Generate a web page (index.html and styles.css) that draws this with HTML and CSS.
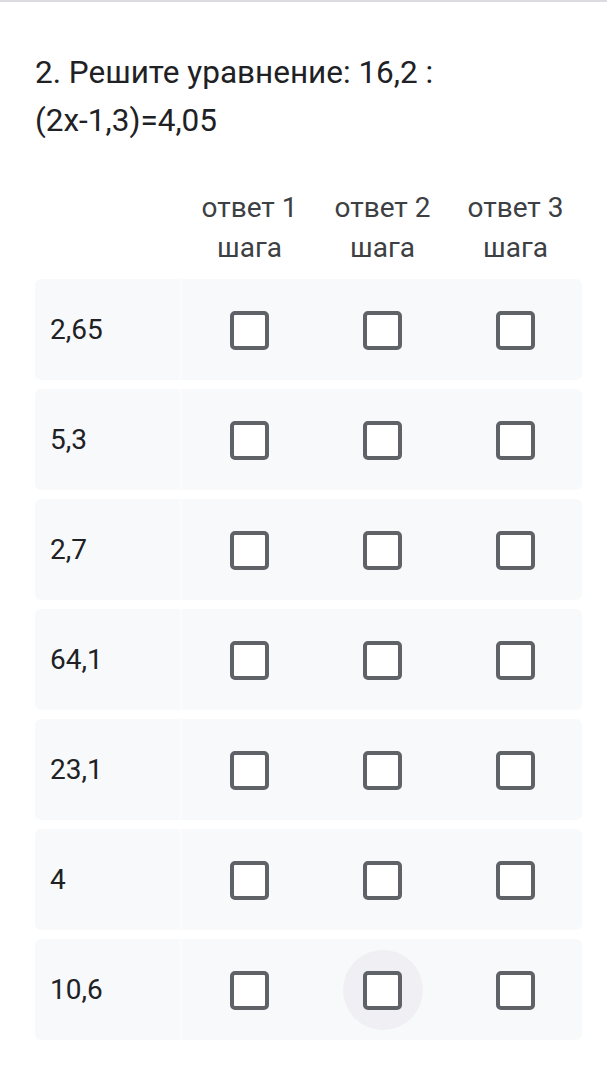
FILE: index.html
```html
<!DOCTYPE html>
<html lang="ru">
<head>
  <meta charset="UTF-8" />
  <meta name="viewport" content="width=device-width, initial-scale=1.0" />
  <title>Решите уравнение</title>
  <link rel="stylesheet" href="styles.css">
</head>
<body>
  <div class="question">
    <div class="question-title">2. Решите уравнение: 16,2 : <span class="nw">(2x-1,3)=4,05</span></div>

    <!-- Column headers -->
    <div class="grid-head">
      <div></div>
      <div class="col-label"><span class="nw">ответ 1</span> шага</div>
      <div class="col-label"><span class="nw">ответ 2</span> шага</div>
      <div class="col-label"><span class="nw">ответ 3</span> шага</div>
    </div>

    <!-- Answer rows -->
    <div class="grid-rows">
      <div class="grid-row">
        <div class="row-label">2,65</div>
        <div class="cell"><span class="box"></span></div>
        <div class="cell"><span class="box"></span></div>
        <div class="cell"><span class="box"></span></div>
      </div>
      <div class="grid-row">
        <div class="row-label">5,3</div>
        <div class="cell"><span class="box"></span></div>
        <div class="cell"><span class="box"></span></div>
        <div class="cell"><span class="box"></span></div>
      </div>
      <div class="grid-row">
        <div class="row-label">2,7</div>
        <div class="cell"><span class="box"></span></div>
        <div class="cell"><span class="box"></span></div>
        <div class="cell"><span class="box"></span></div>
      </div>
      <div class="grid-row">
        <div class="row-label">64,1</div>
        <div class="cell"><span class="box"></span></div>
        <div class="cell"><span class="box"></span></div>
        <div class="cell"><span class="box"></span></div>
      </div>
      <div class="grid-row">
        <div class="row-label">23,1</div>
        <div class="cell"><span class="box"></span></div>
        <div class="cell"><span class="box"></span></div>
        <div class="cell"><span class="box"></span></div>
      </div>
      <div class="grid-row">
        <div class="row-label">4</div>
        <div class="cell"><span class="box"></span></div>
        <div class="cell"><span class="box"></span></div>
        <div class="cell"><span class="box"></span></div>
      </div>
      <div class="grid-row">
        <div class="row-label">10,6</div>
        <div class="cell"><span class="box"></span></div>
        <div class="cell hover"><span class="box"></span></div>
        <div class="cell"><span class="box"></span></div>
      </div>
    </div>
  </div>
</body>
</html>
```

FILE: styles.css
```css
/* Base */
* {
  margin: 0;
  padding: 0;
  box-sizing: border-box;
}
body {
  font-family: Roboto, 'Noto Sans', sans-serif;
  background: #fff;
  color: #202124;
  border-top: 2px solid #dadce0;
}
.nw {
  white-space: nowrap;
}
/* Question card */
.question {
  padding: 47px 25px 0 35px;
}
.question-title {
  font-size: 31.5px;
  line-height: 48px;
  color: #202124;
}
/* Grid header */
.grid-head,
.grid-row {
  display: grid;
  grid-template-columns: 148px repeat(3, 1fr);
}
.grid-head {
  margin-top: 43px;
  margin-bottom: 11px;
}
.col-label {
  font-size: 28px;
  line-height: 40px;
  text-align: center;
  color: #3c4043;
}
/* Grid rows */
.grid-rows {
  display: flex;
  flex-direction: column;
  gap: 9px;
}
.grid-row {
  height: 101px;
  background: #f8f9fa;
  border-radius: 6px;
}
.row-label {
  display: flex;
  align-items: center;
  padding-left: 15px;
  font-size: 28px;
  color: #202124;
  border-right: 4px solid #fbfbfc;
}
.cell {
  display: flex;
  align-items: center;
  justify-content: center;
  position: relative;
}
.box {
  width: 39px;
  height: 39px;
  border: 4px solid #5f6368;
  border-radius: 5px;
  background: #fff;
  position: relative;
  top: 1px;
}
/* Hover halo on one checkbox */
.cell.hover::before {
  content: '';
  position: absolute;
  width: 80px;
  height: 80px;
  border-radius: 50%;
  background: #efeff4;
}
```
